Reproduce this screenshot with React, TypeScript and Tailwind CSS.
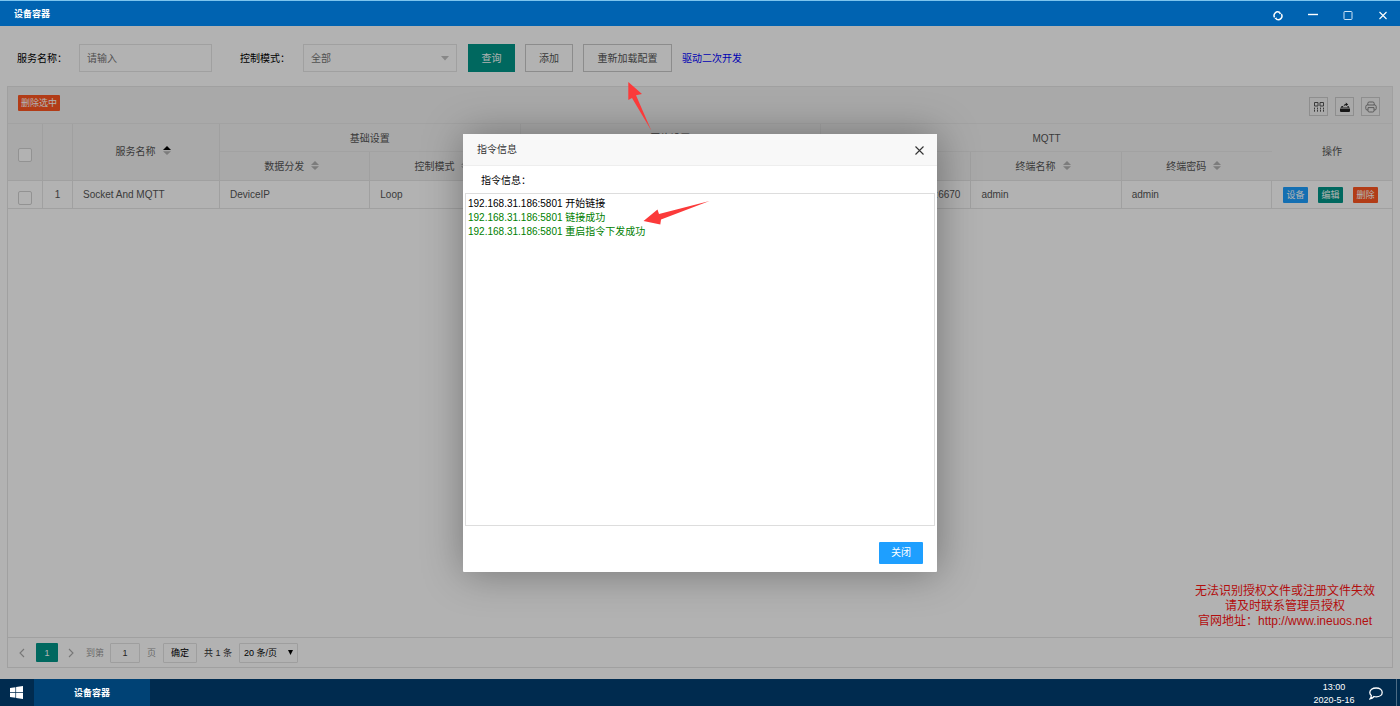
import type { ReactNode } from "react";

function SortIcon({ active = false }: { active?: boolean }) {
  return (
    <svg width="8" height="9" viewBox="0 0 8 9" className="mr-1.5 ml-[7px] inline-block align-baseline" aria-hidden="true">
      <path d="M0 4 L4 0 L8 4 Z" fill={active ? "#000" : "#b2b2b2"} />
      <path d="M0 5.2 L4 9 L8 5.2 Z" fill="#b2b2b2" />
    </svg>
  );
}

function SortHead({ children, last = false }: { children: ReactNode; last?: boolean }) {
  return (
    <th className={`h-[29px] border-b border-[#e6e6e6] px-0 pt-0.5 pb-0 text-center font-normal ${last ? "" : "border-r"}`}>
      {children}
      <SortIcon />
    </th>
  );
}

function GroupHead({ children, span, last = false }: { children: ReactNode; span: number; last?: boolean }) {
  return (
    <th
      colSpan={span}
      className={`h-7 border-b border-[#e9e9e9] px-0 pt-0.5 pb-0 text-center font-normal ${last ? "" : "border-r"}`}
    >
      {children}
    </th>
  );
}

function Cell({ children }: { children: ReactNode }) {
  return <td className="h-7 truncate border-r border-b border-[#e6e6e6] px-2.5 pt-px pb-0">{children}</td>;
}

const checkboxClass = "block size-3.5 appearance-none rounded-xs border border-[#d2d2d2] bg-white";

function TitleBar() {
  return (
    <header className="flex h-[26px] items-center border-t border-[#7cc4ee] bg-[#0063b1] pl-3.5 text-white">
      <h1 className="flex-1 text-[9px] font-bold">设备容器</h1>
      <button aria-label="刷新" className="flex h-6 w-[35px] items-center justify-center pt-1">
        <svg width="10" height="10" viewBox="0 0 10 10" fill="none" stroke="#fff" strokeWidth="1.5">
          <path d="M1.6 6.4 A3.6 3.6 0 0 1 6.6 1.5" />
          <path d="M8.4 3.2 A3.6 3.6 0 0 1 3.4 8.1" />
          <path d="M6.2 0.4 L8.6 2.4 L6.2 3.2 Z M3.8 9.2 L1.4 7.2 L3.8 6.4 Z" fill="#fff" stroke="none" />
        </svg>
      </button>
      <button aria-label="最小化" className="flex h-6 w-[35px] items-center justify-center pt-1">
        <svg width="12" height="10" viewBox="0 0 12 10">
          <path d="M1 3.5 H11" stroke="#fff" strokeWidth="1.4" />
        </svg>
      </button>
      <button aria-label="最大化" className="flex h-6 w-[35px] items-center justify-center pt-1">
        <svg width="10" height="10" viewBox="0 0 10 10">
          <rect x="1" y="0.5" width="8" height="8" rx="0.8" fill="none" stroke="#cfe4f5" strokeWidth="1" />
        </svg>
      </button>
      <button aria-label="关闭窗口" className="flex h-6 w-[35px] items-center justify-center pt-1">
        <svg width="10" height="10" viewBox="0 0 10 10">
          <path d="M1.5 1 L8.5 8 M8.5 1 L1.5 8" stroke="#fff" strokeWidth="1.1" />
        </svg>
      </button>
    </header>
  );
}

function SearchForm() {
  return (
    <form className="flex items-center px-[17px] pt-[18px] pb-3.5" onSubmit={(e) => e.preventDefault()}>
      <label htmlFor="service" className="w-[62px] pt-0.5 text-black">服务名称：</label>
      <input
        id="service"
        placeholder="请输入"
        className="h-7 w-[133px] border border-[#e6e6e6] bg-white px-[7px] pt-px placeholder:text-[#757575]"
      />
      <label htmlFor="mode" className="ml-7 w-[63px] pt-0.5 text-black">控制模式：</label>
      <div className="relative">
        <select id="mode" className="h-7 w-[154px] appearance-none border border-[#e6e6e6] bg-white px-[7px] pt-px text-[#757575]">
          <option>全部</option>
        </select>
        <svg width="8" height="5" viewBox="0 0 8 5" className="pointer-events-none absolute top-3 right-2">
          <path d="M0 0 H8 L4 4.5 Z" fill="#c2c2c2" />
        </svg>
      </div>
      <button className="ml-[11px] h-7 w-[47px] bg-[#009688] pt-0.5 text-white">查询</button>
      <button className="ml-2.5 h-7 w-12 border border-[#c9c9c9] bg-white pt-0.5">添加</button>
      <div className="relative ml-2.5">
        <button className="h-7 w-[89px] border border-[#c9c9c9] bg-white pt-0.5">重新加载配置</button>
        <svg width="24" height="50" viewBox="0 0 24 50" className="pointer-events-none absolute top-[38px] left-[45px] z-30">
          <path d="M0.3 0 L14 12 L8 13.3 L23.3 48.6 L4 16 L0.3 18 Z" fill="#fb3a3a" />
        </svg>
      </div>
      <a href="#dev" className="ml-2.5 pt-0.5 text-[#0000ff]">驱动二次开发</a>
    </form>
  );
}

function ToolButton({ label, children }: { label: string; children: ReactNode }) {
  return (
    <button aria-label={label} className="flex size-[19px] items-center justify-center border border-[#ccc] pl-px">
      {children}
    </button>
  );
}

function Toolbar() {
  return (
    <div className="flex h-[37px] items-start justify-between border-b border-[#e9e9e9] bg-[#f2f2f2] pr-3 pl-2.5">
      <button className="mt-2 h-4 rounded-[1px] bg-[#ff5722] px-[3px] text-[9px] leading-4 text-white">删除选中</button>
      <div className="mt-2.5 flex gap-[7px]">
        <ToolButton label="筛选列">
          <svg width="12" height="12" viewBox="0 0 12 12" fill="none" stroke="#555">
            <path d="M1.5 1.5 h3.5 v3.5 h-3.5 Z M7 1.5 h3.5 v3.5 h-3.5 Z" />
            <path d="M1.5 6.6 V11 M4.5 6.6 V11 M7.5 6.6 V11 M10.5 6.6 V11" strokeDasharray="1.8 0.5" />
          </svg>
        </ToolButton>
        <ToolButton label="导出">
          <svg width="12" height="12" viewBox="0 0 12 12" fill="#222">
            <path d="M1 7.4 H11 V10 Q11 11 10 11 H2 Q1 11 1 10 Z" />
            <path d="M2.8 5 H4.2 L3.6 6.2 H8.6 L8.4 5 H9.4 L10.6 6.8 H1.4 Z" />
            <path d="M4.6 5.8 Q4.6 3 6.8 2.9 V1.6 L9.2 3.4 L6.8 5.2 V4.1 Q5.5 4.2 4.6 5.8 Z" />
          </svg>
        </ToolButton>
        <ToolButton label="打印">
          <svg width="12" height="12" viewBox="0 0 12 12" fill="none" stroke="#777" strokeWidth="0.9">
            <path d="M2.8 4 V2.4 Q2.8 1 4.2 1 H7.8 Q9.2 1 9.2 2.4 V4" />
            <path d="M3 9 H2.2 Q0.8 9 0.8 7.6 V5.6 Q0.8 4 2.4 4 H9.6 Q11.2 4 11.2 5.6 V7.6 Q11.2 9 9.8 9 H9" />
            <path d="M3 6.6 H9 V9.8 Q9 11 7.8 11 H4.2 Q3 11 3 9.8 Z" />
          </svg>
        </ToolButton>
      </div>
    </div>
  );
}

function ServiceTable() {
  return (
    <table className="w-full table-fixed border-separate border-spacing-0">
      <colgroup>
        <col className="w-[35px]" />
        <col className="w-[30px]" />
        <col className="w-[147px]" />
        <col />
        <col />
        <col />
        <col />
        <col />
        <col />
        <col />
        <col className="w-[120px]" />
      </colgroup>
      <thead className="bg-[#f2f2f2]">
        <tr>
          <th rowSpan={2} className="border-r border-b border-[#e6e6e6] px-2.5 pt-1.5 pb-0">
            <input type="checkbox" aria-label="全选" className={checkboxClass} />
          </th>
          <th rowSpan={2} className="border-r border-b border-[#e6e6e6] p-0" />
          <th rowSpan={2} className="border-r border-b border-[#e6e6e6] p-0 text-center font-normal">
            服务名称
            <SortIcon active />
          </th>
          <GroupHead span={2}>基础设置</GroupHead>
          <GroupHead span={2}>网络设置</GroupHead>
          <GroupHead span={3} last>MQTT</GroupHead>
          <th rowSpan={2} className="border-b border-[#e6e6e6] p-0 text-center font-normal">操作</th>
        </tr>
        <tr>
          <SortHead>数据分发</SortHead>
          <SortHead>控制模式</SortHead>
          <SortHead>IP地址</SortHead>
          <SortHead>端口</SortHead>
          <SortHead>服务地址</SortHead>
          <SortHead>终端名称</SortHead>
          <SortHead last>终端密码</SortHead>
        </tr>
      </thead>
      <tbody>
        <tr>
          <td className="h-7 border-r border-b border-[#e6e6e6] px-2.5 pt-1.5 pb-0">
            <input type="checkbox" aria-label="选择第 1 行" className={checkboxClass} />
          </td>
          <td className="border-r border-b border-[#e6e6e6] px-0 pt-px pb-0 text-center">1</td>
          <Cell>Socket And MQTT</Cell>
          <Cell>DeviceIP</Cell>
          <Cell>Loop</Cell>
          <Cell>192.168.31.186</Cell>
          <Cell>5801</Cell>
          <td className="h-7 border-r border-b border-[#e6e6e6] px-2.5 pt-px pb-0 text-right">192.168.31.186:6670</td>
          <Cell>admin</Cell>
          <Cell>admin</Cell>
          <td className="border-b border-[#e6e6e6] pt-px pr-0 pb-0 pl-[11px]">
            <div className="flex gap-2.5 text-[9px] leading-4 text-white">
              <button className="h-4 w-[25px] rounded-[1px] bg-[#1e9fff]">设备</button>
              <button className="h-4 w-[25px] rounded-[1px] bg-[#009688]">编辑</button>
              <button className="h-4 w-[25px] rounded-[1px] bg-[#ff5722]">删除</button>
            </div>
          </td>
        </tr>
      </tbody>
    </table>
  );
}

function Chevron({ d }: { d: string }) {
  return (
    <svg width="6" height="10" viewBox="0 0 6 10" fill="none" stroke="#aaa" strokeWidth="1.1">
      <path d={d} />
    </svg>
  );
}

function Pager() {
  return (
    <nav aria-label="分页" className="flex h-[30px] items-center border-t border-[#e6e6e6] pl-2.5 text-[9px] text-[#333]">
      <button aria-label="上一页" className="flex w-[18px] pl-px">
        <Chevron d="M5 1 L1 5 L5 9" />
      </button>
      <button className="h-[19px] w-[22px] rounded-[1px] bg-[#009688] text-white">1</button>
      <button aria-label="下一页" className="flex w-7 pl-[10px]">
        <Chevron d="M1 1 L5 5 L1 9" />
      </button>
      <label htmlFor="page" className="w-6 text-[#999]">到第</label>
      <input id="page" defaultValue="1" className="h-5 w-[30px] rounded-[1px] border border-[#e2e2e2] bg-white text-center" />
      <span className="w-[23px] pl-[7px] text-[#999]">页</span>
      <button className="h-5 w-[34px] rounded-[1px] border border-[#e2e2e2] bg-white text-black">确定</button>
      <span className="ml-[7px] w-[35px] whitespace-nowrap">共 1 条</span>
      <div className="relative">
        <select aria-label="每页条数" className="h-5 w-[59px] appearance-none rounded-[1px] border border-[#e2e2e2] bg-white pl-1 text-black">
          <option>20 条/页</option>
        </select>
        <svg width="5" height="5" viewBox="0 0 5 5" className="pointer-events-none absolute top-[7px] right-[5px]">
          <path d="M0 0 H5 L2.5 5 Z" fill="#000" />
        </svg>
      </div>
    </nav>
  );
}

function CommandDialog() {
  return (
    <div
      role="dialog"
      aria-labelledby="dialog-title"
      className="relative flex h-[438px] w-[474px] flex-col rounded-[1px] bg-white shadow-[1px_1px_40px_rgba(0,0,0,0.35)]"
    >
      <div className="flex h-8 items-center justify-between border-b border-[#eee] bg-[#f8f8f8] pt-0.5 pr-3 pl-3.5 text-[#333]">
        <h2 id="dialog-title">指令信息</h2>
        <button aria-label="关闭对话框">
          <svg width="11" height="11" viewBox="0 0 11 11">
            <path d="M1.5 1.5 L9.5 9.5 M9.5 1.5 L1.5 9.5" stroke="#333" strokeWidth="1.1" />
          </svg>
        </button>
      </div>
      <p className="px-[18px] pt-[7px] pb-[5px] leading-[15px] text-black">指令信息：</p>
      <div className="relative mx-0.5 flex-1 border border-[#ddd] px-0.5 py-[3px] leading-[14px]">
        <p className="text-black">192.168.31.186:5801 开始链接</p>
        <p className="text-[#008000]">192.168.31.186:5801 链接成功</p>
        <p className="text-[#008000]">192.168.31.186:5801 重启指令下发成功</p>
        <svg width="68" height="26" viewBox="0 0 68 26" className="pointer-events-none absolute top-1.5 left-[177px]">
          <path d="M0.5 21 L14.5 9.6 L16 14 L66.5 1 L18 19.6 L17.3 24.6 Z" fill="#fb3a3a" />
        </svg>
      </div>
      <div className="flex h-[46px] items-start justify-end pt-4 pr-3.5">
        <button className="h-[22px] w-11 rounded-[1px] bg-[#1e9fff] text-white">关闭</button>
      </div>
    </div>
  );
}

function TaskBar() {
  return (
    <footer className="flex h-[27px] items-center bg-[#002b4f] text-[9px] text-white">
      <button aria-label="开始" className="flex h-full w-[34px] items-center pl-2.5">
        <svg width="13" height="13" viewBox="0 0 13 13" fill="#fff">
          <path d="M0 2 L5.4 1.2 V6.1 H0 Z M6.1 1.1 L13 0 V6.1 H6.1 Z M0 6.8 H5.4 V11.8 L0 11 Z M6.1 6.8 H13 V13 L6.1 11.9 Z" />
        </svg>
      </button>
      <button className="h-full w-[116px] bg-[#004275] font-bold">设备容器</button>
      <div className="ml-auto w-14 pt-0.5 text-center leading-[13px] font-medium">
        <p>13:00</p>
        <p>2020-5-16</p>
      </div>
      <button aria-label="通知" className="flex w-[34px] pt-px pl-[7px]">
        <svg width="14" height="13" viewBox="0 0 14 13" fill="none" stroke="#fff" strokeWidth="1.3">
          <path d="M7.2 1 C10.8 1 13.2 3 13.2 5.4 C13.2 8 10.6 9.8 7.2 9.8 C6.4 9.8 5.7 9.7 5 9.5 C4 10.8 2.7 11.6 1 11.9 C1.9 11 2.3 9.9 2.3 8.4 C1.3 7.6 0.8 6.6 0.8 5.4 C0.8 3 3.4 1 7.2 1 Z" />
        </svg>
      </button>
      <div className="h-full w-1 border-l border-[#4d6b84]" />
    </footer>
  );
}

export default function App() {
  return (
    <div className="flex min-h-screen flex-col bg-white font-['Liberation_Sans','Noto_Sans_CJK_SC',sans-serif] text-[10px] leading-[14px] text-[#555]">
      <TitleBar />
      <main className="relative flex flex-1 flex-col">
        <SearchForm />
        <section className="mx-[7px] mb-[11px] flex flex-1 flex-col border border-[#e6e6e6]">
          <Toolbar />
          <ServiceTable />
          <div className="flex flex-1 items-end justify-end pr-[17px] pb-2">
            <p className="text-center text-xs leading-[15px] text-[#ff1414]">
              无法识别授权文件或注册文件失效
              <br />
              请及时联系管理员授权
              <br />
              官网地址：http://www.ineuos.net
            </p>
          </div>
          <Pager />
        </section>
        <div className="absolute inset-0 z-20 flex items-center justify-center bg-black/30">
          <CommandDialog />
        </div>
      </main>
      <TaskBar />
    </div>
  );
}
